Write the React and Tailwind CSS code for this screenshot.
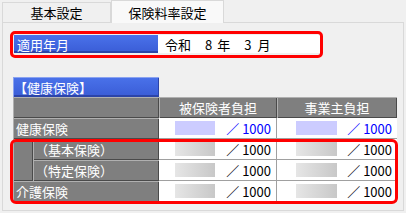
import React from 'react';

const grayCell =
  'bg-[#7f7f7f] shadow-[inset_1px_1px_0_#b0b0b0,inset_-1px_-1px_0_#4a4a4a] text-white';

const rows = [
  { label: '健康保険', blue: true },
  { label: '（基本保険）', sub: true },
  { label: '（特定保険）', sub: true },
  { label: '介護保険' },
];

const RateCell = ({ blue, boxLeft, last }) => (
  <div
    className={`flex items-center bg-white border-b border-[#a0a0a0] ${
      last ? 'w-[120px]' : 'w-[118px] border-r'
    }`}
  >
    <div
      className={`h-[14px] ${boxLeft} ${
        blue ? 'bg-[#ccccff]' : 'bg-gradient-to-r from-[#e6e6e6] to-[#c8c8c8]'
      }`}
    />
    <span
      className={`ml-auto pr-[5px] whitespace-pre ${blue ? 'text-[#0000ff]' : 'text-black'}`}
    >
      ／ 1000
    </span>
  </div>
);

export default function App() {
  return (
    <div
      className="relative w-[406px] h-[213px] bg-[#f0f0f0] text-[13px] leading-none text-black overflow-hidden"
      style={{ fontFamily: '"Noto Sans CJK JP", "Noto Sans", sans-serif' }}
    >
      {/* tabs */}
      <div className="flex h-[22px] pl-[2px]">
        <div className="w-[109px] mt-[2px] border border-b-0 border-[#d9d9d9] bg-[#f0f0f0] flex items-center justify-center">
          基本設定
        </div>
        <div className="w-[113px] -mb-px z-10 border border-b-0 border-[#d9d9d9] bg-[#f9f9f9] flex items-center justify-center">
          保険料率設定
        </div>
      </div>

      {/* panel */}
      <div className="mx-[2px] h-[189px] border border-[#d9d9d9] bg-[#f0f0f0] pl-[10px] pt-[12px]">
        <div className="flex h-[18px] ml-[1px]">
          <div className="w-[144px] flex items-center pl-[3px] text-white bg-gradient-to-b from-[#4a72ea] to-[#3a5cd6] shadow-[inset_0_-2px_0_#2c44a8]">
            適用年月
          </div>
          <div className="w-[162px] flex items-center bg-white whitespace-pre">
            <span className="ml-[7px]">令和</span>
            <span className="ml-[14px]">8</span>
            <span className="ml-[5px]">年</span>
            <span className="ml-[14px]">3</span>
            <span className="ml-[6px]">月</span>
          </div>
        </div>

        {/* health insurance table */}
        <div className="mt-[24px] w-[384px]">
          <div className="flex h-[20px]">
            <div className="w-[146px] flex items-center pl-[1px] text-white bg-gradient-to-b from-[#4a72ea] to-[#3a5cd6] shadow-[inset_1px_1px_0_#8aa2f0,inset_-1px_-2px_0_#2c44a8]">
              【健康保険】
            </div>
          </div>
          <div className="flex h-[21px]">
            <div className={`w-[146px] ${grayCell}`} />
            <div className={`w-[118px] flex items-center justify-center ${grayCell}`}>
              被保険者負担
            </div>
            <div className={`w-[120px] flex items-center justify-center ${grayCell}`}>
              事業主負担
            </div>
          </div>

          <div className="flex h-[21px]">
            <div className={`w-[146px] flex items-center pl-[3px] ${grayCell}`}>健康保険</div>
            <RateCell blue boxLeft="ml-[16px] w-[40px]" />
            <RateCell blue last boxLeft="ml-[19px] w-[41px]" />
          </div>

          <div className="flex">
            <div className={`w-[20px] ${grayCell}`} />
            <div className="flex flex-col">
              {rows
                .filter((r) => r.sub)
                .map((r) => (
                  <div key={r.label} className="flex h-[21px]">
                    <div className={`w-[126px] flex items-center pl-[2px] ${grayCell}`}>
                      {r.label}
                    </div>
                    <RateCell boxLeft="ml-[16px] w-[40px]" />
                    <RateCell last boxLeft="ml-[19px] w-[41px]" />
                  </div>
                ))}
            </div>
          </div>

          <div className="flex h-[21px]">
            <div className={`w-[146px] flex items-center pl-[3px] ${grayCell}`}>介護保険</div>
            <RateCell boxLeft="ml-[16px] w-[40px]" />
            <RateCell last boxLeft="ml-[19px] w-[41px]" />
          </div>
        </div>
      </div>

      {/* red highlight annotations */}
      <div className="absolute left-[10px] top-[31px] w-[313px] h-[27px] border-[3px] border-[#ff0000] rounded-[5px] pointer-events-none" />
      <div className="absolute left-[10px] top-[139px] w-[388px] h-[65px] border-[3px] border-[#ff0000] rounded-[6px] pointer-events-none" />
    </div>
  );
}
